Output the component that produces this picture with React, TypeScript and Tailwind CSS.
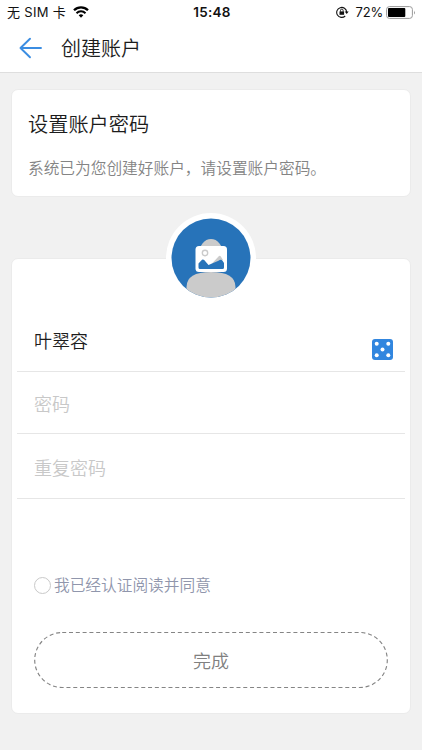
import React from "react";

function StatusBar() {
  return (
    <div className="grid h-6 grid-cols-3 items-center text-[13px] leading-6 text-[#111]">
      <div className="flex items-center gap-[7px] pl-[7px]">
        <span className="whitespace-nowrap tracking-[0.3px]">无 SIM 卡</span>
        <svg width="16" height="12" viewBox="0 0 16 12" fill="none" stroke="#000">
          <path d="M1 4.3a10 10 0 0 1 14 0" strokeWidth="2.3" />
          <path d="M3.5 7.2a6.4 6.4 0 0 1 9 0" strokeWidth="2" />
          <path d="M8 11.7 5.7 9.3a3.3 3.3 0 0 1 4.6 0Z" fill="#000" stroke="none" />
        </svg>
      </div>
      <div className="pl-[2px] text-center text-[13.5px] font-semibold tracking-[0.3px]">15:48</div>
      <div className="flex items-center justify-end pr-[6px]">
        <svg width="13" height="12" viewBox="0 0 13 12" fill="none" stroke="#111">
          <path d="M9.2 10A5 5 0 1 1 10.7 6" strokeWidth="1.1" />
          <path d="M8.7 5.4h4l-2 2.6Z" fill="#111" stroke="none" />
          <path d="M3.5 5.4h4.6v3.4H3.5Z" fill="#111" stroke="none" />
          <path d="M4.5 5.6V4.4a1.3 1.3 0 0 1 2.6 0v1.2" strokeWidth=".9" />
        </svg>
        <span className="ml-[7px] tracking-[-0.2px]">72%</span>
        <svg className="ml-[3px]" width="30" height="13" viewBox="0 0 30 13">
          <rect x=".6" y=".6" width="25.8" height="11.8" rx="2.8" fill="#fff" stroke="#999" />
          <rect x="2" y="2" width="17.3" height="9" rx="1" fill="#000" />
          <path d="M28 4.4q1.6 2.1 0 4.2Z" fill="#888" />
        </svg>
      </div>
    </div>
  );
}

function Avatar() {
  return (
    <svg width="90" height="90" viewBox="0 0 90 90">
      <defs>
        <clipPath id="disc">
          <circle cx="45" cy="45" r="39.5" />
        </clipPath>
      </defs>
      <circle cx="45" cy="45" r="45" fill="#fff" />
      <circle cx="45" cy="45" r="39.5" fill="#2773b9" />
      <g clipPath="url(#disc)" fill="#cbcbcb">
        <ellipse cx="45" cy="41" rx="12" ry="15" />
        <path d="M20.5 90V74Q20.5 59 45 59T69.5 74V90Z" />
      </g>
      <rect x="29.5" y="33" width="31.5" height="26" rx="3.5" fill="#fff" />
      <circle cx="39" cy="40" r="2.7" fill="none" stroke="#cbcbcb" strokeWidth="1.4" />
      <path d="M45 51.5 53 43q1-.8 1.8.4L57 47Z" fill="#cbcbcb" />
      <path d="M32.5 50.5 36 46.7q1.2-.8 2.2.4L42.5 52l10-4.3q2.5-2 4 0l1.5 2.3v4.5q0 1.5-1.5 1.5H34q-1.5 0-1.5-1.5Z" fill="#2773b9" />
    </svg>
  );
}

function Dice() {
  return (
    <svg width="21" height="21" viewBox="0 0 21 21">
      <rect width="21" height="21" rx="3" fill="#3186df" />
      <g fill="#fff">
        <circle cx="4.7" cy="4.8" r="2" />
        <circle cx="16.3" cy="4.8" r="2" />
        <circle cx="10.5" cy="10.6" r="2" />
        <circle cx="4.7" cy="16.3" r="2" />
        <circle cx="16.3" cy="16.3" r="2" />
      </g>
    </svg>
  );
}

export default function App() {
  return (
    <div className="flex h-[750px] w-full flex-col overflow-hidden bg-[#f1f1f1] font-['Inter','Noto_Sans_CJK_SC',sans-serif]">
      <header className="h-[73px] shrink-0 border-b border-[#dedede] bg-white">
        <StatusBar />
        <div className="flex h-12 items-center pl-[19px]">
          <svg width="24" height="22" viewBox="0 0 24 22" fill="none" stroke="#3b8de2" strokeWidth="1.9" strokeLinecap="round" strokeLinejoin="round">
            <path d="M11 1.7 1.5 11 11 20.3M1.5 11H22" />
          </svg>
          <h1 className="ml-[18px] pt-[2px] text-[20px] font-[350] leading-[30px] text-[#1c1c1c]">创建账户</h1>
        </div>
      </header>

      <section className="mx-[11px] mt-4 h-[108px] shrink-0 rounded-[7px] border border-[#ebebeb] bg-white pl-[16px] pt-[20px]">
        <h2 className="text-[20.2px] font-[350] leading-[30px] text-[#1c1c1c]">设置账户密码</h2>
        <p className="mt-[17px] whitespace-nowrap text-[15.7px] font-[350] leading-6 text-[#848484]">系统已为您创建好账户，请设置账户密码。</p>
      </section>

      <section className="mx-[11px] mt-[61px] flex h-[456px] shrink-0 flex-col rounded-[7px] border border-[#ebebeb] bg-white px-[5px]">
        <div className="-mt-[46px] flex h-[90px] justify-center">
          <Avatar />
        </div>
        <div className="flex h-[69px] items-center justify-between border-b border-[#e6e6e6] pl-[17px] pr-[12px]">
          <span className="mt-[9px] text-[18px] font-[350] leading-[26px] text-[#1c1c1c]">叶翠容</span>
          <span className="mt-[24px]"><Dice /></span>
        </div>
        <div className="flex h-[62px] items-center border-b border-[#e6e6e6] pl-[17px] pt-[3px] text-[18px] font-[350] text-[#c8c8c8]">密码</div>
        <div className="flex h-[65px] items-center border-b border-[#e6e6e6] pl-[17px] pt-[4px] text-[18px] font-[350] text-[#c8c8c8]">重复密码</div>
        <div className="mt-[74px] flex h-6 items-center pl-[17px]">
          <span className="h-[17px] w-[17px] rounded-full border border-[#c9c9c9]" />
          <span className="ml-[3px] pt-[2px] text-[15.7px] font-[350] leading-6 text-[#9096ac]">我已经认证阅读并同意</span>
        </div>
        <button className="ml-[17px] mt-[35px] grid h-[56px] w-[354px] place-items-center text-[18px] font-[350] text-[#808080]">
          <svg className="col-start-1 row-start-1" width="354" height="56" fill="none">
            <rect x=".7" y=".5" width="352.6" height="55" rx="27.5" stroke="#858585" strokeWidth="1.15" strokeDasharray="4 2.8" />
          </svg>
          <span className="col-start-1 row-start-1 pt-[3px]">完成</span>
        </button>
      </section>
    </div>
  );
}
